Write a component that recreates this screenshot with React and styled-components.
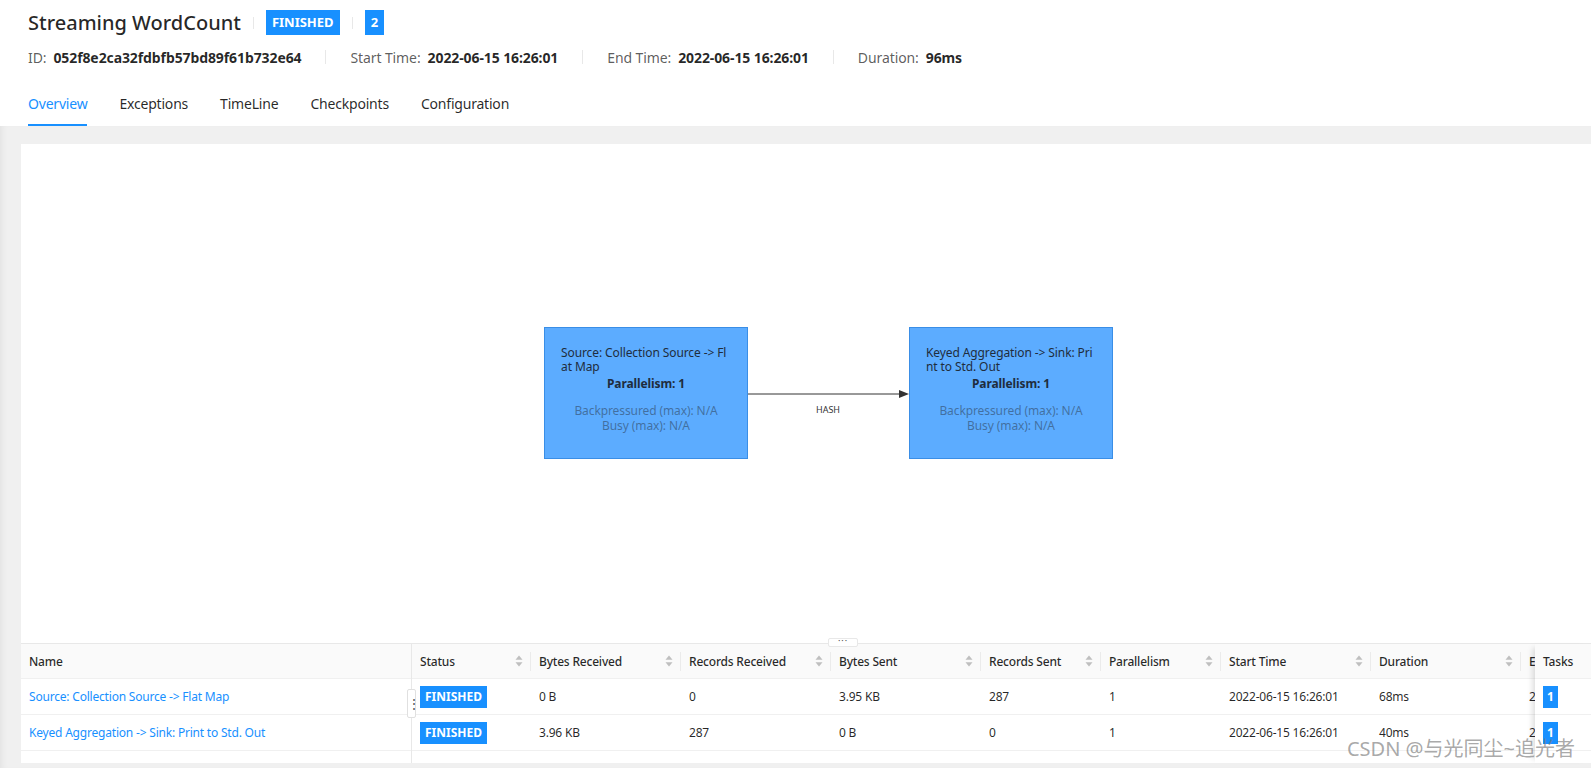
import React from "react";
import styled, { createGlobalStyle } from "styled-components";

const GlobalStyle = createGlobalStyle`
  html, body {
    margin: 0;
    padding: 0;
  }
  body {
    font-family: "Noto Sans", "Noto Sans CJK SC", sans-serif;
    color: rgba(0, 0, 0, 0.85);
    background: #f0f0f0;
  }
  * {
    box-sizing: border-box;
  }
`;

const vertices = [
  {
    id: "v1",
    name: "Source: Collection Source -> Flat Map",
    left: 523,
    top: 183,
    status: "FINISHED",
    bytesIn: "0 B",
    recordsIn: "0",
    bytesOut: "3.95 KB",
    recordsOut: "287",
    duration: "68ms",
  },
  {
    id: "v2",
    name: "Keyed Aggregation -> Sink: Print to Std. Out",
    left: 888,
    top: 183,
    status: "FINISHED",
    bytesIn: "3.96 KB",
    recordsIn: "287",
    bytesOut: "0 B",
    recordsOut: "0",
    duration: "40ms",
  },
];

const columns = [
  { key: "status", title: "Status", width: 119 },
  { key: "bytesIn", title: "Bytes Received", width: 150 },
  { key: "recordsIn", title: "Records Received", width: 150 },
  { key: "bytesOut", title: "Bytes Sent", width: 150 },
  { key: "recordsOut", title: "Records Sent", width: 120 },
  { key: "parallelism", title: "Parallelism", width: 120 },
  { key: "start", title: "Start Time", width: 150 },
  { key: "duration", title: "Duration", width: 150 },
  { key: "end", title: "End Time", width: 150 },
];

function SortIcon() {
  return (
    <SortWrap>
      <svg width="8" height="12" viewBox="0 0 8 12">
        <path d="M4 0.5 L7.5 4.8 L0.5 4.8 Z" fill="#bfbfbf" />
        <path d="M0.5 7.2 L7.5 7.2 L4 11.5 Z" fill="#bfbfbf" />
      </svg>
    </SortWrap>
  );
}

function cellValue(row, key) {
  if (key === "status") return <SmallTag>{row.status}</SmallTag>;
  if (key === "parallelism") return "1";
  if (key === "start" || key === "end") return "2022-06-15 16:26:01";
  return row[key];
}

export default function App() {
  return (
    <Page>
      <GlobalStyle />
      <Header>
        <TitleRow>
          <Title>Streaming WordCount</Title>
          <Divider />
          <Tag>FINISHED</Tag>
          <Divider />
          <Tag>2</Tag>
        </TitleRow>
        <MetaRow>
          <Label>ID:</Label>
          <Value>052f8e2ca32fdbfb57bd89f61b732e64</Value>
          <MetaDivider />
          <Label>Start Time:</Label>
          <Value>2022-06-15 16:26:01</Value>
          <MetaDivider />
          <Label>End Time:</Label>
          <Value>2022-06-15 16:26:01</Value>
          <MetaDivider />
          <Label>Duration:</Label>
          <Value>96ms</Value>
        </MetaRow>
        <Tabs>
          <Tab $active>Overview</Tab>
          <Tab>Exceptions</Tab>
          <Tab>TimeLine</Tab>
          <Tab>Checkpoints</Tab>
          <Tab>Configuration</Tab>
        </Tabs>
      </Header>

      <Content>
        <Card>
          <Graph>
            <EdgeSvg width="100%" height="100%">
              <line x1="727" y1="250" x2="880" y2="250" stroke="#333" strokeWidth="1" />
              <polygon points="888,250 878,246 878,254" fill="#333" />
            </EdgeSvg>
            <EdgeLabel>HASH</EdgeLabel>
            {vertices.map((v) => (
              <Node key={v.id} style={{ left: v.left, top: v.top }}>
                <NodeTitle>{v.name}</NodeTitle>
                <NodeParallel>Parallelism: 1</NodeParallel>
                <NodeMetric $first>Backpressured (max): N/A</NodeMetric>
                <NodeMetric>Busy (max): N/A</NodeMetric>
              </Node>
            ))}
          </Graph>

          <TablePanel>
            <SplitHandle>···</SplitHandle>
            <NamePane>
              <HeadRow>
                <HeadCell $width={390}>Name</HeadCell>
              </HeadRow>
              {vertices.map((v) => (
                <BodyRow key={v.id}>
                  <Cell $width={390}>
                    <Link>{v.name}</Link>
                  </Cell>
                </BodyRow>
              ))}
              <ResizeHandle>⋮</ResizeHandle>
            </NamePane>
            <ScrollPane>
              <HeadRow>
                {columns.map((c) => (
                  <HeadCell key={c.key} $width={c.width} $sep>
                    {c.title}
                    <SortIcon />
                  </HeadCell>
                ))}
              </HeadRow>
              {vertices.map((v) => (
                <BodyRow key={v.id}>
                  {columns.map((c) => (
                    <Cell key={c.key} $width={c.width}>
                      {cellValue(v, c.key)}
                    </Cell>
                  ))}
                </BodyRow>
              ))}
            </ScrollPane>
            <TasksPane>
              <HeadRow>
                <HeadCell $width={56}>Tasks</HeadCell>
              </HeadRow>
              {vertices.map((v) => (
                <BodyRow key={v.id}>
                  <Cell $width={56}>
                    <CountTag>1</CountTag>
                  </Cell>
                </BodyRow>
              ))}
            </TasksPane>
          </TablePanel>
        </Card>
      </Content>
      <Watermark>CSDN @与光同尘~追光者</Watermark>
    </Page>
  );
}

const Page = styled.div`
  position: relative;
  height: 100vh;
  display: flex;
  flex-direction: column;
  overflow: hidden;
`;

const Header = styled.header`
  background: #fff;
  padding: 10px 28px 0;
`;

const TitleRow = styled.div`
  display: flex;
  align-items: center;
  height: 25px;
`;

const Title = styled.h1`
  margin: 0;
  font-size: 20px;
  font-weight: 500;
  line-height: 25px;
  color: rgba(0, 0, 0, 0.85);
`;

const Divider = styled.span`
  width: 1px;
  height: 12px;
  margin: 0 12px;
  background: #e8e8e8;
`;

const Tag = styled.span`
  height: 25px;
  line-height: 25px;
  padding: 0 6px;
  background: #1890ff;
  color: #fff;
  font-size: 13px;
  font-weight: 700;
`;

const MetaRow = styled.div`
  display: flex;
  align-items: center;
  height: 22px;
  margin-top: 11px;
  font-size: 14px;
  letter-spacing: -0.1px;
`;

const Label = styled.span`
  color: rgba(0, 0, 0, 0.65);
`;

const Value = styled.span`
  margin-left: 7px;
  font-weight: 700;
  color: rgba(0, 0, 0, 0.85);
`;

const MetaDivider = styled.span`
  width: 1px;
  height: 14px;
  margin: 0 24px;
  background: #e8e8e8;
`;

const Tabs = styled.nav`
  display: flex;
  gap: 32px;
  margin-top: 14px;
`;

const Tab = styled.span`
  padding: 11px 0 9px;
  line-height: 22px;
  font-size: 14px;
  letter-spacing: -0.2px;
  color: ${(p) => (p.$active ? "#1890ff" : "rgba(0, 0, 0, 0.85)")};
  border-bottom: 2px solid ${(p) => (p.$active ? "#1890ff" : "transparent")};
`;

const Content = styled.main`
  flex: 1;
  display: flex;
  padding: 18px 0 5px 21px;
  box-shadow: inset 6px 0 6px -4px rgba(0, 0, 0, 0.06);
`;

const Card = styled.section`
  flex: 1;
  display: flex;
  flex-direction: column;
  background: #fff;
  min-width: 0;
`;

const Graph = styled.div`
  position: relative;
  height: 499px;
  flex: none;
`;

const EdgeSvg = styled.svg`
  position: absolute;
  left: 0;
  top: 0;
`;

const EdgeLabel = styled.span`
  position: absolute;
  left: 807px;
  top: 259px;
  transform: translateX(-50%);
  font-size: 9px;
  line-height: 14px;
  color: #333;
`;

const Node = styled.div`
  position: absolute;
  width: 204px;
  height: 132px;
  padding: 18px 16px 0;
  background: #5cacff;
  border: 1px solid #3a8ee6;
  font-size: 12px;
  letter-spacing: -0.1px;
`;

const NodeTitle = styled.div`
  line-height: 14px;
  word-break: break-all;
  color: #1f2d3d;
`;

const NodeParallel = styled.div`
  margin-top: 3px;
  line-height: 14px;
  text-align: center;
  font-weight: 700;
  color: #1f2d3d;
`;

const NodeMetric = styled.div`
  margin-top: ${(p) => (p.$first ? "12px" : "0")};
  line-height: 15px;
  text-align: center;
  color: rgba(40, 50, 65, 0.5);
`;

const TablePanel = styled.div`
  position: relative;
  flex: 1;
  display: flex;
  border-top: 1px solid #e8e8e8;
`;

const SplitHandle = styled.span`
  position: absolute;
  left: 807px;
  top: -6px;
  width: 30px;
  height: 9px;
  background: #fff;
  border: 1px solid #e8e8e8;
  border-radius: 2px;
  font-size: 9px;
  line-height: 4px;
  letter-spacing: 1px;
  text-align: center;
  color: #555;
  z-index: 2;
`;

const NamePane = styled.div`
  position: relative;
  width: 391px;
  flex: none;
  border-right: 1px solid #e8e8e8;
`;

const ResizeHandle = styled.span`
  position: absolute;
  right: -5px;
  top: 45px;
  width: 9px;
  height: 29px;
  background: #fff;
  border: 1px solid #e0e0e0;
  border-radius: 2px;
  font-size: 12px;
  line-height: 27px;
  text-align: center;
  color: #444;
  z-index: 2;
`;

const ScrollPane = styled.div`
  flex: 1;
  min-width: 0;
  overflow: hidden;
`;

const TasksPane = styled.div`
  width: 56px;
  flex: none;
  background: #fff;
  box-shadow: -6px 0 6px -4px rgba(0, 0, 0, 0.15);
  z-index: 1;
`;

const HeadRow = styled.div`
  display: flex;
  width: max-content;
  min-width: 100%;
  height: 35px;
  background: #fafafa;
  border-bottom: 1px solid #f0f0f0;
`;

const HeadCell = styled.div`
  position: relative;
  flex: none;
  width: ${(p) => p.$width}px;
  display: flex;
  align-items: center;
  padding: 0 8px;
  font-size: 12px;
  font-weight: 500;
  letter-spacing: -0.2px;
  color: rgba(0, 0, 0, 0.85);
  white-space: nowrap;
  overflow: hidden;

  &::after {
    content: "";
    display: ${(p) => (p.$sep ? "block" : "none")};
    position: absolute;
    right: 0;
    top: 8px;
    width: 1px;
    height: 19px;
    background: rgba(0, 0, 0, 0.06);
  }
`;

const SortWrap = styled.span`
  display: flex;
  margin-left: auto;
`;

const BodyRow = styled.div`
  display: flex;
  width: max-content;
  min-width: 100%;
  height: 36px;
  border-bottom: 1px solid #f0f0f0;
`;

const Cell = styled.div`
  flex: none;
  width: ${(p) => p.$width}px;
  display: flex;
  align-items: center;
  padding: 0 8px;
  font-size: 12px;
  letter-spacing: -0.2px;
  color: rgba(0, 0, 0, 0.85);
  white-space: nowrap;
  overflow: hidden;
`;

const Link = styled.span`
  color: #1890ff;
`;

const SmallTag = styled.span`
  height: 22px;
  line-height: 22px;
  padding: 0 5px;
  background: #1890ff;
  color: #fff;
  font-weight: 700;
  font-size: 12px;
  letter-spacing: 0;
`;

const CountTag = styled(SmallTag)`
  padding: 0 4px;
`;

const Watermark = styled.span`
  position: absolute;
  right: 16px;
  bottom: 6px;
  z-index: 5;
  white-space: nowrap;
  font-family: "Noto Sans", "Noto Sans CJK SC", sans-serif;
  font-size: 20px;
  color: rgba(120, 120, 120, 0.65);
  pointer-events: none;
`;
